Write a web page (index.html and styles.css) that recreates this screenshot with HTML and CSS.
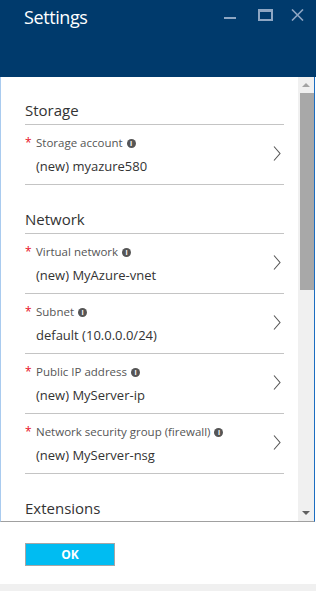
FILE: index.html
```html
<!DOCTYPE html>
<html lang="en">
<head>
    <meta charset="UTF-8">
    <meta name="viewport" content="width=device-width, initial-scale=1.0">
    <title>Settings</title>
    <link rel="stylesheet" href="styles.css">
</head>
<body>
    <div class="blade">
        <div class="blade-header">
            <h1>Settings</h1>
            <div class="window-controls">
                <span class="ctl ctl-min"></span>
                <span class="ctl ctl-max"></span>
                <svg class="ctl-close" width="13" height="12" viewBox="0 0 13 12">
                    <path d="M1 0.5 L12 11.5 M12 0.5 L1 11.5" stroke="#8ea6c3" stroke-width="1.6" fill="none"/>
                </svg>
            </div>
        </div>

        <div class="blade-body">
            <div class="scroll-content">
                <div class="section">
                    <h2>Storage</h2>
                    <div class="field">
                        <div class="field-text">
                            <div class="field-label"><span class="req">*</span>Storage account<span class="info">i</span></div>
                            <div class="field-value">(new) myazure580</div>
                        </div>
                        <svg class="chevron" width="8" height="15" viewBox="0 0 8 15"><path d="M1 0.5 L7 7.5 L1 14.5" stroke="#555" stroke-width="1.1" fill="none"/></svg>
                    </div>
                </div>

                <div class="section">
                    <h2>Network</h2>
                    <div class="field">
                        <div class="field-text">
                            <div class="field-label"><span class="req">*</span>Virtual network<span class="info">i</span></div>
                            <div class="field-value">(new) MyAzure-vnet</div>
                        </div>
                        <svg class="chevron" width="8" height="15" viewBox="0 0 8 15"><path d="M1 0.5 L7 7.5 L1 14.5" stroke="#555" stroke-width="1.1" fill="none"/></svg>
                    </div>
                    <div class="field">
                        <div class="field-text">
                            <div class="field-label"><span class="req">*</span>Subnet<span class="info">i</span></div>
                            <div class="field-value">default (10.0.0.0/24)</div>
                        </div>
                        <svg class="chevron" width="8" height="15" viewBox="0 0 8 15"><path d="M1 0.5 L7 7.5 L1 14.5" stroke="#555" stroke-width="1.1" fill="none"/></svg>
                    </div>
                    <div class="field">
                        <div class="field-text">
                            <div class="field-label"><span class="req">*</span>Public IP address<span class="info">i</span></div>
                            <div class="field-value">(new) MyServer-ip</div>
                        </div>
                        <svg class="chevron" width="8" height="15" viewBox="0 0 8 15"><path d="M1 0.5 L7 7.5 L1 14.5" stroke="#555" stroke-width="1.1" fill="none"/></svg>
                    </div>
                    <div class="field">
                        <div class="field-text">
                            <div class="field-label"><span class="req">*</span>Network security group (firewall)<span class="info">i</span></div>
                            <div class="field-value">(new) MyServer-nsg</div>
                        </div>
                        <svg class="chevron" width="8" height="15" viewBox="0 0 8 15"><path d="M1 0.5 L7 7.5 L1 14.5" stroke="#555" stroke-width="1.1" fill="none"/></svg>
                    </div>
                </div>

                <div class="section">
                    <h2>Extensions</h2>
                </div>
            </div>

            <div class="scrollbar">
                <div class="sb-arrow sb-up"></div>
                <div class="sb-track">
                    <div class="sb-thumb"></div>
                </div>
                <div class="sb-arrow sb-down"></div>
            </div>
        </div>

        <div class="blade-footer">
            <button class="ok-btn" type="button">OK</button>
        </div>
    </div>
    <div class="status-strip"></div>
</body>
</html>
```

FILE: styles.css
```css
body {
    margin: 0;
    background-color: #fff;
    font-family: 'Open Sans', 'Noto Sans', sans-serif;
    width: 316px;
}

.blade {
    display: flex;
    flex-direction: column;
    width: 316px;
}

.blade-header {
    background-color: #003a6c;
    height: 77px;
    display: flex;
    justify-content: space-between;
    align-items: flex-start;
    padding: 0 12px 0 24px;
    box-sizing: border-box;
}

h1 {
    margin: 0;
    padding-top: 4px;
    color: #fff;
    font-size: 18px;
    font-weight: normal;
    line-height: 26px;
    letter-spacing: -0.4px;
}

.window-controls {
    display: flex;
    align-items: flex-start;
    padding-top: 9px;
}

.ctl-min {
    display: block;
    width: 12px;
    height: 2px;
    background-color: #8ea6c3;
    margin: 8px 22px 0 0;
}

.ctl-max {
    display: block;
    width: 11px;
    height: 7px;
    border: 2px solid #8ea6c3;
    border-top-width: 3px;
    margin: 0 18px 0 0;
}

.ctl-close {
    display: block;
}

.blade-body {
    display: flex;
    height: 444px;
    border-left: 1px solid #a9cbef;
    border-right: 1px solid #1b6dc1;
    margin-right: 1px;
    border-bottom: 1px solid #a0a0a0;
}

.scroll-content {
    flex: 1;
    overflow: hidden;
    padding: 23px 14px 0 24px;
}

.section {
    margin-bottom: 24px;
}

h2 {
    margin: 0;
    font-size: 15px;
    font-weight: normal;
    line-height: 20px;
    color: #333;
    padding-bottom: 4px;
    border-bottom: 1px solid #c4c4c4;
}

.field {
    display: flex;
    align-items: center;
    justify-content: space-between;
    padding: 10px 3px 9px 0;
    border-bottom: 1px solid #c4c4c4;
}

.field-label {
    font-size: 11.5px;
    line-height: 16px;
    color: #555;
    display: flex;
    align-items: center;
}

.req {
    color: #e81123;
    width: 11px;
    font-size: 12px;
}

.info {
    display: inline-block;
    width: 9px;
    height: 9px;
    border-radius: 50%;
    background-color: #555;
    color: #fff;
    font-size: 7px;
    font-weight: bold;
    line-height: 9px;
    text-align: center;
    margin-left: 4px;
}

.field-value {
    margin-top: 6px;
    padding-left: 11px;
    font-size: 13px;
    line-height: 18px;
    color: #333;
}

.chevron {
    display: block;
    margin-top: -3px;
}

.scrollbar {
    width: 16px;
    background-color: #f0f0f0;
    display: flex;
    flex-direction: column;
    align-items: center;
}

.sb-arrow {
    height: 16px;
    width: 100%;
    display: flex;
    align-items: center;
    justify-content: center;
}

.sb-up::before {
    content: '';
    border-left: 4px solid transparent;
    border-right: 4px solid transparent;
    border-bottom: 4px solid #a3a3a3;
}

.sb-down::before {
    content: '';
    border-left: 4px solid transparent;
    border-right: 4px solid transparent;
    border-top: 4px solid #606060;
}

.sb-track {
    flex: 1;
    width: 100%;
    padding-left: 2px;
    box-sizing: border-box;
}

.sb-thumb {
    height: 197px;
    background-color: #a8a8a8;
}

.blade-footer {
    height: 62px;
    padding: 20px 0 0 25px;
    box-sizing: border-box;
}

.ok-btn {
    width: 90px;
    height: 23px;
    background-color: #00bcf2;
    border: 1px solid #a6a6a6;
    color: #fff;
    font-family: 'Open Sans', sans-serif;
    font-size: 12px;
    font-weight: bold;
    padding: 0;
}

.status-strip {
    height: 7px;
    background-color: #f0f0f0;
}
```
